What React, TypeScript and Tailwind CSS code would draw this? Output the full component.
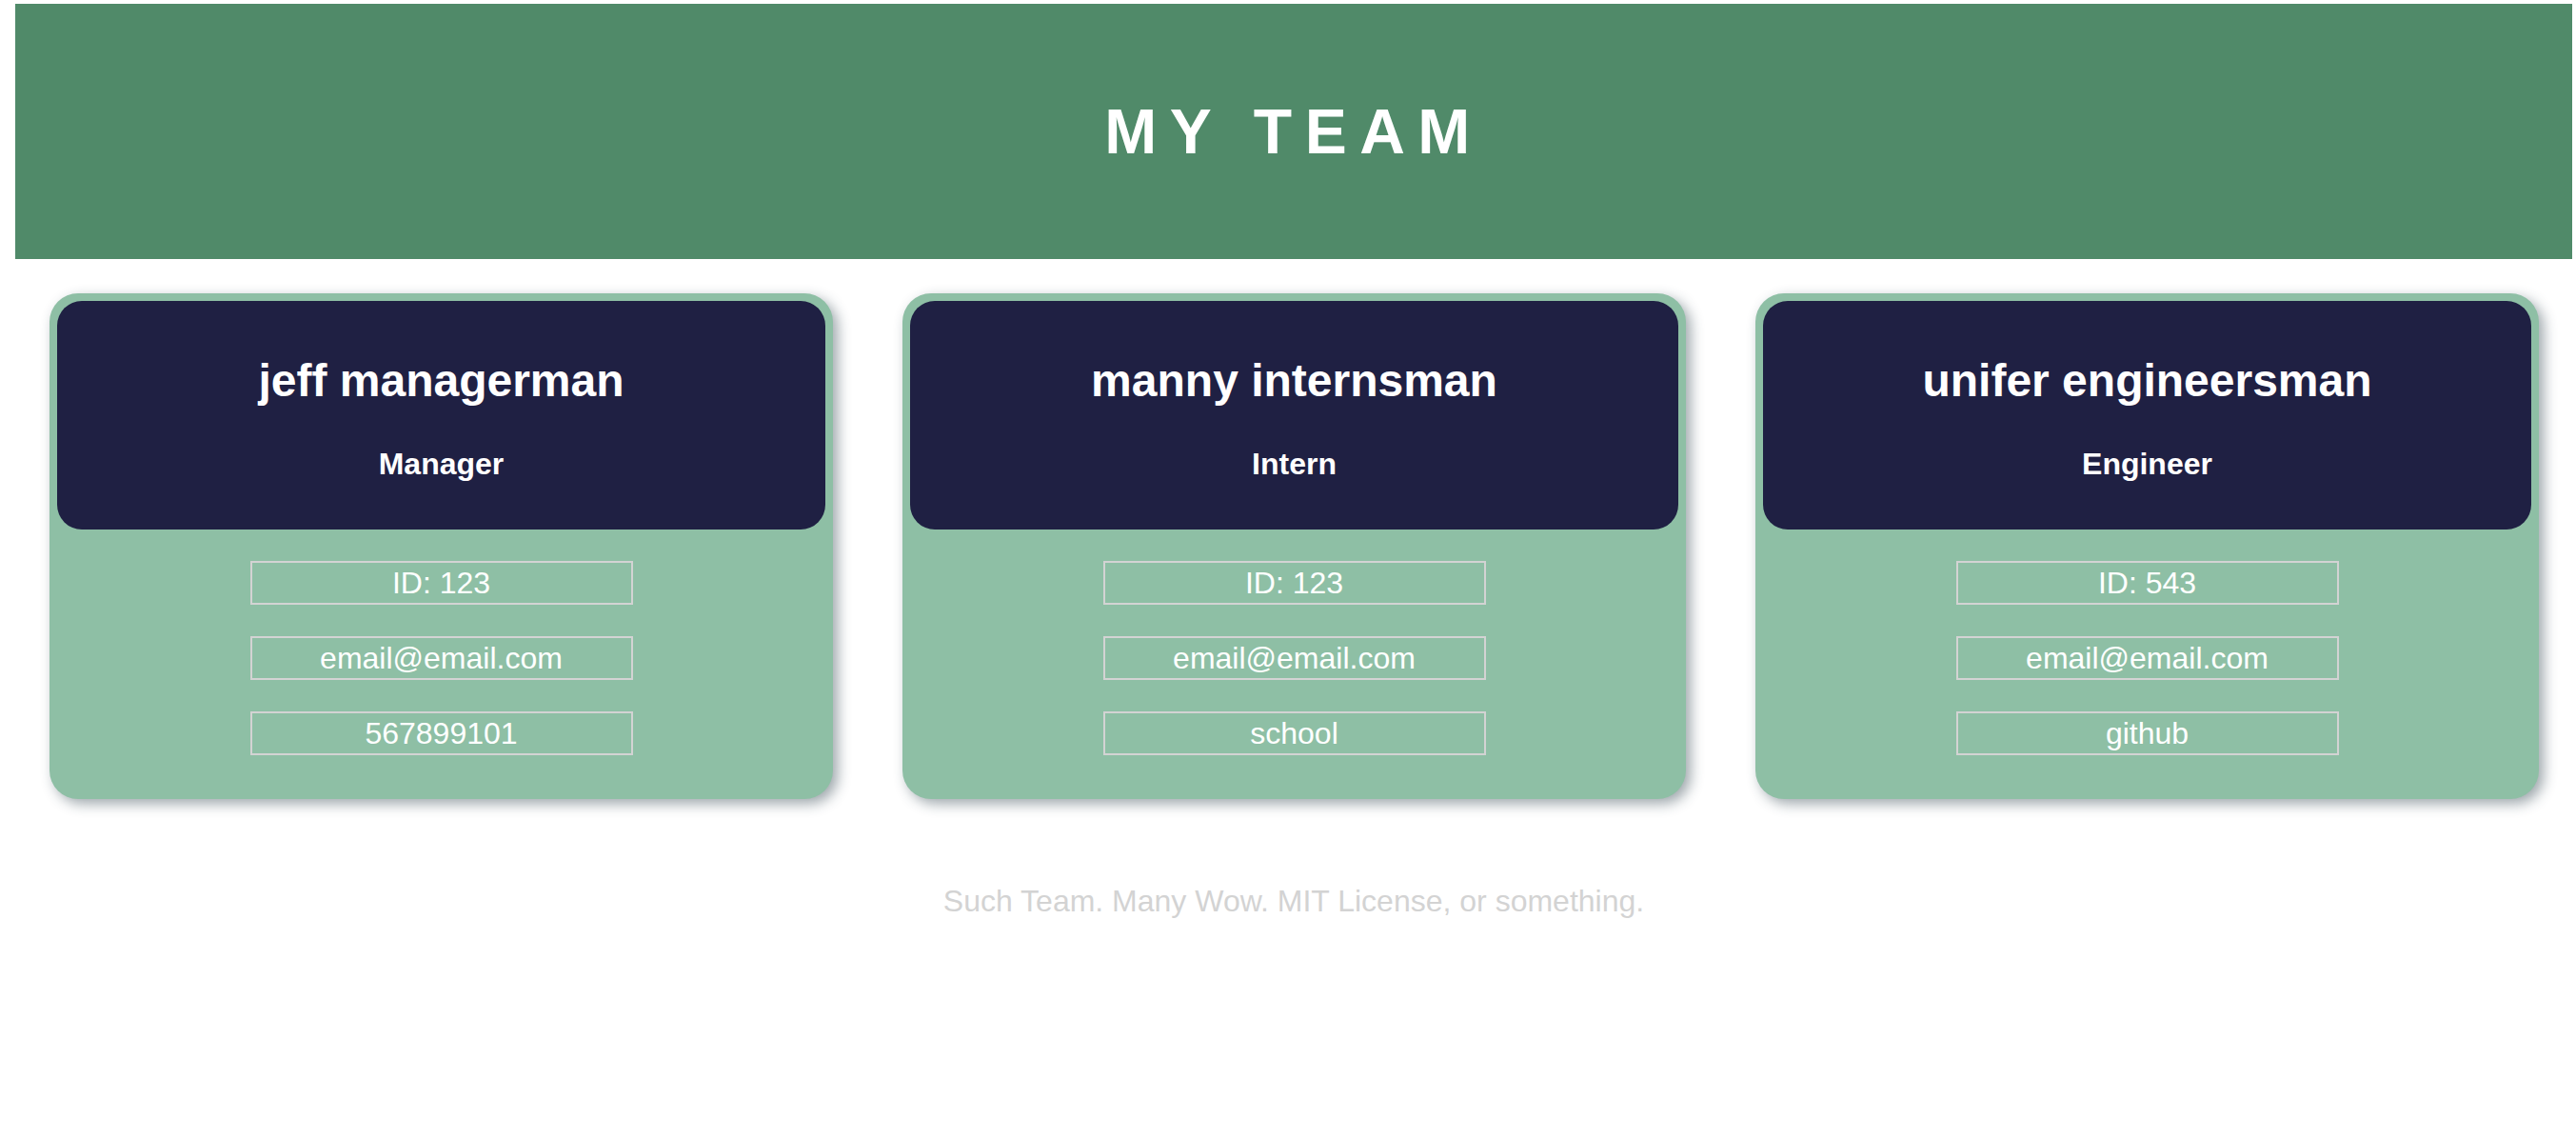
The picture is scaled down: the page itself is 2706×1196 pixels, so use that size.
import React from 'react';

interface Member {
  name: string;
  role: string;
  id: string;
  email: string;
  extra: string;
}

const team: Member[] = [
  { name: 'jeff managerman', role: 'Manager', id: '123', email: 'email@email.com', extra: '567899101' },
  { name: 'manny internsman', role: 'Intern', id: '123', email: 'email@email.com', extra: 'school' },
  { name: 'unifer engineersman', role: 'Engineer', id: '543', email: 'email@email.com', extra: 'github' },
];

const InfoBox: React.FC<{ children: React.ReactNode }> = ({ children }) => (
  <div className="w-[402px] h-[46px] border-2 border-[#d3d3d3] flex items-center justify-center text-[32px] leading-[42px] text-white">
    {children}
  </div>
);

const MemberCard: React.FC<{ member: Member }> = ({ member }) => (
  <div className="bg-[#8ebfa5] rounded-[30px] p-[8px] shadow-[5px_5px_14px_rgba(40,60,70,0.45)]">
    {/* Name + role */}
    <div className="bg-[#1f2043] rounded-[26px] h-[240px] pt-[56px] flex flex-col items-center text-white">
      <h2 className="text-[48px] leading-[56px] font-bold">{member.name}</h2>
      <h3 className="mt-[39px] text-[32px] leading-[40px] font-bold">{member.role}</h3>
    </div>

    {/* Details */}
    <div className="flex flex-col items-center gap-[33px] pt-[33px] pb-[38px]">
      <InfoBox>ID: {member.id}</InfoBox>
      <InfoBox>{member.email}</InfoBox>
      <InfoBox>{member.extra}</InfoBox>
    </div>
  </div>
);

const App: React.FC = () => {
  return (
    <div className="min-h-screen bg-white pt-[4px] pl-[16px] pr-[4px] font-['Liberation_Sans',Arial,sans-serif]">
      <header className="h-[268px] bg-[#508a69] flex items-center justify-center">
        <h1 className="text-[66px] font-bold text-white tracking-[13.5px]">MY TEAM</h1>
      </header>

      <main className="mt-[36px] px-[36px] pr-[35px] grid grid-cols-3 gap-[73px]">
        {team.map((m) => (
          <MemberCard key={m.name} member={m} />
        ))}
      </main>

      <footer className="mt-[83px] text-center text-[32px] text-[#d3d3d3]">
        Such Team. Many Wow. MIT License, or something.
      </footer>
    </div>
  );
};

export default App;
